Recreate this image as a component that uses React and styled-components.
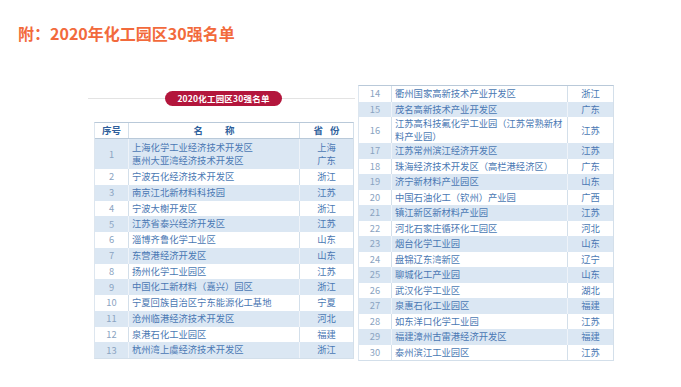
import React from "react";
import styled, { createGlobalStyle } from "styled-components";

const GlobalStyle = createGlobalStyle`
  body {
    margin: 0;
    background: #fff;
    font-family: "Noto Sans CJK SC", "Noto Sans", sans-serif;
  }
`;

const Page = styled.div`
  width: 681px;
  height: 387px;
  overflow: hidden;
`;

const Title = styled.h2`
  margin: 0;
  padding: 23px 0 0 18px;
  height: 20px;
  line-height: 20px;
  font-size: 16px;
  font-weight: 700;
  color: #f26a3c;
`;

const Content = styled.div`
  display: flex;
  align-items: flex-start;
  margin-top: 42px;
`;

const LeftCol = styled.div`
  margin-left: 88px;
  width: 267px;
`;

const Banner = styled.div`
  margin-top: 6px;
  height: 15px;
  display: flex;
  align-items: center;
  justify-content: center;
  background: linear-gradient(#fff 7px, #e3e3e3 7px, #e3e3e3 8px, #fff 8px);
`;

const Pill = styled.div`
  width: 117px;
  height: 15px;
  margin-left: 4px;
  border-radius: 8px;
  background: #b3163c;
  color: #fff;
  font-size: 8.5px;
  font-weight: 700;
  line-height: 15px;
  text-align: center;
  letter-spacing: 0.2px;
`;

const Table = styled.div`
  width: ${(p) => p.$width}px;
  margin-left: ${(p) => p.$offset || 0}px;
  margin-top: ${(p) => p.$top || 0}px;
  border-top: 1px solid #b9c9d9;
  border-bottom: 1px solid #d3dfea;
  border-left: 1px solid #dde6ef;
  border-right: 1px solid #d3dfea;
  box-sizing: border-box;
`;

const Row = styled.div`
  display: grid;
  grid-template-columns: ${(p) => p.$cols};
  height: ${(p) => p.$h}px;
  background: ${(p) => (p.$shade ? "#dbe7f3" : "#fff")};
  border-bottom: ${(p) => (p.$head ? "1px solid #b9c9d9" : "none")};
  box-sizing: border-box;
`;

const Cell = styled.div`
  display: flex;
  flex-direction: column;
  justify-content: center;
  align-items: ${(p) => (p.$left ? "flex-start" : "center")};
  padding-left: ${(p) => (p.$left ? "3px" : "0")};
  border-right: ${(p) => (p.$last ? "none" : `1px solid ${p.$shade ? "#eef3f9" : "#d3dfea"}`)};
  font-size: 9.3px;
  line-height: ${(p) => p.$lh || 11}px;
  color: ${(p) => (p.$num ? "#8aa3c1" : "#4a78b3")};
  white-space: nowrap;
`;

const Line = styled.span`
  display: block;
  height: ${(p) => p.$lh}px;
`;

const HeadCell = styled(Cell)`
  font-size: 9.5px;
  font-weight: 700;
  color: #2f5f9c;
  word-spacing: ${(p) => p.$gap || 0}px;
`;

const left = [
  [1, ["上海化学工业经济技术开发区", "惠州大亚湾经济技术开发区"], ["上海", "广东"]],
  [2, "宁波石化经济技术开发区", "浙江"],
  [3, "南京江北新材料科技园", "江苏"],
  [4, "宁波大榭开发区", "浙江"],
  [5, "江苏省泰兴经济开发区", "江苏"],
  [6, "淄博齐鲁化学工业区", "山东"],
  [7, "东营港经济开发区", "山东"],
  [8, "扬州化学工业园区", "江苏"],
  [9, "中国化工新材料（嘉兴）园区", "浙江"],
  [10, "宁夏回族自治区宁东能源化工基地", "宁夏"],
  [11, "沧州临港经济技术开发区", "河北"],
  [12, "泉港石化工业园区", "福建"],
  [13, "杭州湾上虞经济技术开发区", "浙江"],
];

const right = [
  [14, "衢州国家高新技术产业开发区", "浙江"],
  [15, "茂名高新技术产业开发区", "广东"],
  [16, ["江苏高科技氟化学工业园（江苏常熟新材", "料产业园）"], "江苏"],
  [17, "江苏常州滨江经济开发区", "江苏"],
  [18, "珠海经济技术开发区（高栏港经济区）", "广东"],
  [19, "济宁新材料产业园区", "山东"],
  [20, "中国石油化工（钦州）产业园", "广西"],
  [21, "镇江新区新材料产业园", "江苏"],
  [22, "河北石家庄循环化工园区", "河北"],
  [23, "烟台化学工业园", "山东"],
  [24, "盘锦辽东湾新区", "辽宁"],
  [25, "聊城化工产业园", "山东"],
  [26, "武汉化学工业区", "湖北"],
  [27, "泉惠石化工业园区", "福建"],
  [28, "如东洋口化学工业园", "江苏"],
  [29, "福建漳州古雷港经济开发区", "福建"],
  [30, "泰州滨江工业园区", "江苏"],
];

const lines = (v, lh) =>
  (Array.isArray(v) ? v : [v]).map((t) => (
    <Line key={t} $lh={lh}>
      {t}
    </Line>
  ));

const Rows = ({ data, cols, h, tallH, lh }) =>
  data.map(([n, name, prov]) => {
    const tall = Array.isArray(name);
    const rowLh = tall ? lh : h;
    const shade = n % 2 === 1;
    return (
      <Row key={n} $cols={cols} $h={tall ? tallH : h} $shade={shade}>
        <Cell $num $shade={shade}>{n}</Cell>
        <Cell $left $shade={shade} $lh={rowLh}>{lines(name, rowLh)}</Cell>
        <Cell $last $shade={shade} $lh={rowLh}>{lines(prov, rowLh)}</Cell>
      </Row>
    );
  });

const leftCols = "34px 171px 1fr";
const rightCols = "33px 176px 1fr";

export default function App() {
  return (
    <>
      <GlobalStyle />
      <Page>
        <Title>附：2020年化工园区30强名单</Title>
        <Content>
          <LeftCol>
            <Banner>
              <Pill>2020化工园区30强名单</Pill>
            </Banner>
            <Table $width={260} $offset={6} $top={16}>
              <Row $cols={leftCols} $h={16} $head>
                <HeadCell>序号</HeadCell>
                <HeadCell $gap={20}>名 称</HeadCell>
                <HeadCell $last $gap={5}>省 份</HeadCell>
              </Row>
              <Rows data={left} cols={leftCols} h={15.75} tallH={30} lh={13} />
            </Table>
          </LeftCol>
          <Table $width={256} $offset={3}>
            <Rows data={right} cols={rightCols} h={15.5} tallH={26} lh={13} />
          </Table>
        </Content>
      </Page>
    </>
  );
}
